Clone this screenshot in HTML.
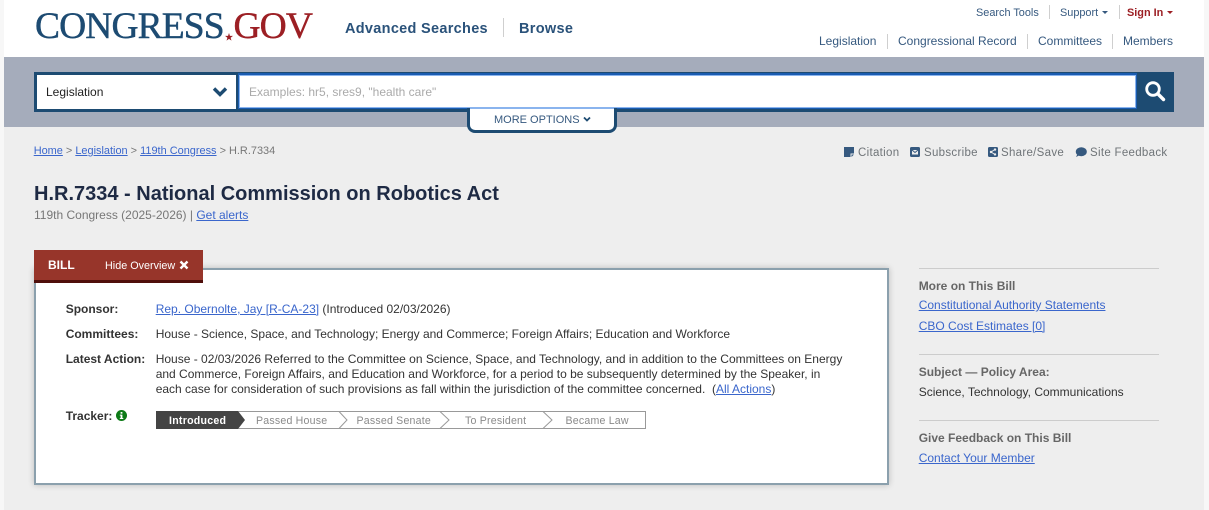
<!DOCTYPE html>
<html><head><meta charset="utf-8">
<style>
html,body{margin:0;padding:0;width:1209px;height:510px;overflow:hidden;background:#f7f7f7;font-family:"Liberation Sans",sans-serif;}
.t{position:absolute;white-space:nowrap;line-height:14px;}
a{color:#3a66cc;text-decoration:underline;}
.n{color:#36597f;font-size:12px;}
.sep{position:absolute;width:1px;background:#cfcfcf;}
.b{font-weight:bold;}
.hr{position:absolute;left:919px;width:240px;height:1px;background:#cccccc;}
.lab{font-size:12px;font-weight:bold;color:#333;}
.body{font-size:12px;color:#333;}
.side{font-size:12px;color:#666;font-weight:bold;}
.trk{font-size:10.6px;color:#8a8a8a;letter-spacing:.2px;}
.act{font-size:11.5px;color:#6f7478;letter-spacing:.3px;}
.logo{font-family:'Liberation Serif',serif;font-size:37.5px;line-height:38px;letter-spacing:-.9px;-webkit-text-stroke:.45px;}
</style></head>
<body>
<div style="position:absolute;left:4px;top:0;width:1200px;height:510px;background:#eeeeee"></div>
<div style="position:absolute;left:4px;top:0;width:1200px;height:57px;background:#fff"></div>
<div style="position:absolute;left:4px;top:57px;width:1200px;height:70px;background:#a5acbb"></div>

<div class="t logo" style="left:35px;top:8px;color:#1d4b72">CONGRESS</div>
<svg style="position:absolute;left:225px;top:33px" width="8" height="8" viewBox="0 0 10 10"><polygon points="5,0 6.2,3.6 10,3.6 7,5.9 8.1,9.6 5,7.3 1.9,9.6 3,5.9 0,3.6 3.8,3.6" fill="#9c1f24"/></svg>
<div class="t logo" style="left:233.5px;top:8px;color:#9c1f24">GOV</div>

<div class="t b" style="left:345px;top:20.5px;font-size:14.5px;line-height:16px;color:#2a527a;letter-spacing:.3px">Advanced Searches</div>
<div class="sep" style="left:503px;top:18px;height:19px"></div>
<div class="t b" style="left:519px;top:20.5px;font-size:14.5px;line-height:16px;color:#2a527a;letter-spacing:.3px">Browse</div>

<div class="t" style="left:976px;top:6px;font-size:10.9px;color:#36597f;">Search Tools</div>
<div class="sep" style="left:1049px;top:5px;height:14px"></div>
<div class="t" style="left:1060px;top:6px;font-size:10.9px;color:#36597f;">Support</div>
<div style="position:absolute;left:1102px;top:11px;border:3px solid transparent;border-top:3.5px solid #36597f;border-bottom:0"></div>
<div class="sep" style="left:1119px;top:5px;height:14px"></div>
<div class="t b" style="left:1127px;top:6px;font-size:10.9px;color:#9c1f24">Sign In</div>
<div style="position:absolute;left:1167px;top:11px;border:3px solid transparent;border-top:3.5px solid #9c1f24;border-bottom:0"></div>

<div class="t n" style="left:819px;top:34px">Legislation</div>
<div class="sep" style="left:887px;top:34px;height:15px"></div>
<div class="t n" style="left:898px;top:34px">Congressional Record</div>
<div class="sep" style="left:1027px;top:34px;height:15px"></div>
<div class="t n" style="left:1038px;top:34px">Committees</div>
<div class="sep" style="left:1112px;top:34px;height:15px"></div>
<div class="t n" style="left:1123px;top:34px">Members</div>

<div style="position:absolute;left:34px;top:72px;width:1140px;height:40px;background:#1d4b72"></div>
<div style="position:absolute;left:37px;top:75px;width:199px;height:34px;background:#fff"></div>
<div class="t" style="left:46px;top:85px;font-size:12px;color:#222">Legislation</div>
<svg style="position:absolute;left:212px;top:86px" width="16" height="12" viewBox="0 0 16 12"><path d="M2 2.5 L8 8.5 L14 2.5" fill="none" stroke="#1d4b72" stroke-width="3.4"/></svg>
<div style="position:absolute;left:238px;top:73px;width:899px;height:36px;background:#1a5cb0"></div>
<div style="position:absolute;left:239px;top:75px;width:897px;height:33px;background:#fff;border:1px solid #8ab4ee;box-sizing:border-box"></div>
<div class="t" style="left:249px;top:85px;font-size:12px;color:#aaa">Examples: hr5, sres9, "health care"</div>
<svg style="position:absolute;left:1144px;top:80px" width="22" height="22" viewBox="0 0 22 22"><circle cx="9" cy="9" r="6.3" fill="none" stroke="#fff" stroke-width="2.8"/><path d="M14 14 L19.5 19.5" stroke="#fff" stroke-width="3.4" stroke-linecap="round"/></svg>

<div style="position:absolute;left:467px;top:108px;width:150px;height:25px;box-sizing:border-box;background:#fff;border:3px solid #1d4b72;border-top:0;border-radius:0 0 8px 8px"></div>
<div style="position:absolute;left:470px;top:108px;width:144px;height:1px;background:#8ab4ee"></div>
<div class="t" style="left:494px;top:113px;font-size:11px;color:#36597f">MORE OPTIONS</div>
<svg style="position:absolute;left:583px;top:116px" width="8" height="7" viewBox="0 0 8 7"><path d="M1 1.5 L4 4.5 L7 1.5" fill="none" stroke="#1d4b72" stroke-width="1.8"/></svg>

<div class="t" style="left:33.7px;top:144px;font-size:10.95px;color:#777"><a href="#">Home</a> &gt; <a href="#">Legislation</a> &gt; <a href="#">119th Congress</a> &gt; H.R.7334</div>

<svg style="position:absolute;left:844px;top:147px" width="10" height="10" viewBox="0 0 10 10"><path d="M0 0H10V6.5H6.5V10H0Z" fill="#36597f"/><path d="M7.5 7.5H10L7.5 10Z" fill="#36597f"/></svg>
<div class="t act" style="left:858px;top:146px">Citation</div>
<svg style="position:absolute;left:910px;top:147px" width="10" height="10" viewBox="0 0 10 10"><rect width="10" height="10" rx="1.5" fill="#36597f"/><rect x="2" y="3" width="6" height="4.5" fill="#eee"/><path d="M2 3 L5 5.5 L8 3" fill="none" stroke="#36597f"/></svg>
<div class="t act" style="left:924px;top:146px">Subscribe</div>
<svg style="position:absolute;left:988px;top:147px" width="10" height="10" viewBox="0 0 10 10"><rect width="10" height="10" rx="1.5" fill="#36597f"/><path d="M7 2.5 L3 5 L7 7.5" fill="none" stroke="#eee"/><circle cx="7" cy="2.6" r="1.2" fill="#eee"/><circle cx="3" cy="5" r="1.2" fill="#eee"/><circle cx="7" cy="7.4" r="1.2" fill="#eee"/></svg>
<div class="t act" style="left:1001px;top:146px">Share/Save</div>
<svg style="position:absolute;left:1075px;top:146.5px" width="12" height="10" viewBox="0 0 12 10"><ellipse cx="6.3" cy="4.7" rx="5.5" ry="4.5" fill="#36597f"/><path d="M1 10 L3 6 L5 8Z" fill="#36597f"/></svg>
<div class="t act" style="left:1090px;top:146px">Site Feedback</div>

<div class="t b" style="left:34px;top:183px;font-size:20px;line-height:22px;color:#1e2a44">H.R.7334 - National Commission on Robotics Act</div>
<div class="t" style="left:34px;top:208px;font-size:12px;color:#777">119th Congress (2025-2026) | <a href="#">Get alerts</a></div>

<div style="position:absolute;left:34px;top:268px;width:855px;height:217px;box-sizing:border-box;background:#fff;border:2px solid #8ba0ad;box-shadow:0 0 6px rgba(0,0,0,.22)"></div>
<div style="position:absolute;left:34px;top:250px;width:169px;height:30px;background:#97352a;border-bottom:3px solid #4f0f0b"></div>
<div class="t b" style="left:48px;top:258px;font-size:12px;color:#fff">BILL</div>
<div class="t" style="left:105px;top:258.5px;font-size:10.8px;color:#fff">Hide Overview</div>
<svg style="position:absolute;left:179px;top:260px" width="10" height="10" viewBox="0 0 10 10"><path d="M1.5 1.5 L8.5 8.5 M8.5 1.5 L1.5 8.5" stroke="#fff" stroke-width="2.4"/></svg>

<div class="t lab" style="left:65.7px;top:302px">Sponsor:</div>
<div class="t body" style="left:155.7px;top:302px"><a href="#">Rep. Obernolte, Jay [R-CA-23]</a> (Introduced 02/03/2026)</div>
<div class="t lab" style="left:65.7px;top:327px">Committees:</div>
<div class="t body" style="left:155.7px;top:327px">House - Science, Space, and Technology; Energy and Commerce; Foreign Affairs; Education and Workforce</div>
<div class="t lab" style="left:65.7px;top:352px">Latest Action:</div>
<div class="t body" style="left:155.7px;top:352px">House - 02/03/2026 Referred to the Committee on Science, Space, and Technology, and in addition to the Committees on Energy</div>
<div class="t body" style="left:155.7px;top:367px">and Commerce, Foreign Affairs, and Education and Workforce, for a period to be subsequently determined by the Speaker, in</div>
<div class="t body" style="left:155.7px;top:382px">each case for consideration of such provisions as fall within the jurisdiction of the committee concerned.&nbsp; (<a href="#">All Actions</a>)</div>
<div class="t lab" style="left:65.7px;top:409px">Tracker:</div>
<svg style="position:absolute;left:116px;top:410px" width="11" height="11" viewBox="0 0 11 11"><circle cx="5.5" cy="5.5" r="5.5" fill="#0c7a16"/><rect x="4.6" y="2" width="1.8" height="1.7" fill="#fff"/><path d="M3.8 4.6H6.4V8H7.3V9H3.8V8H4.6V5.6H3.8Z" fill="#fff"/></svg>

<svg style="position:absolute;left:156px;top:411px" width="490" height="18" viewBox="0 0 490 18">
<rect x=".5" y=".5" width="489" height="17" fill="#fff" stroke="#999"/>
<path d="M0 0H82L89 9L82 18H0Z" fill="#444"/>
<path d="M183 .5L191 9L183 17.5M284 .5L293 9L284 17.5M387 .5L396 9L387 17.5" fill="none" stroke="#999"/>
</svg>
<div class="t b" style="left:169px;top:414px;font-size:10.6px;color:#fff;letter-spacing:.25px">Introduced</div>
<div class="t trk" style="left:256px;top:414px">Passed House</div>
<div class="t trk" style="left:356.5px;top:414px">Passed Senate</div>
<div class="t trk" style="left:465px;top:414px">To President</div>
<div class="t trk" style="left:565.5px;top:414px">Became Law</div>

<div class="hr" style="top:268px"></div>
<div class="t side" style="left:918.7px;top:279px">More on This Bill</div>
<div class="t" style="left:918.7px;top:298px;font-size:12px"><a href="#">Constitutional Authority Statements</a></div>
<div class="t" style="left:918.7px;top:319px;font-size:12px"><a href="#">CBO Cost Estimates [0]</a></div>
<div class="hr" style="top:354px"></div>
<div class="t side" style="left:918.7px;top:365px">Subject — Policy Area:</div>
<div class="t body" style="left:918.7px;top:385px">Science, Technology, Communications</div>
<div class="hr" style="top:420px"></div>
<div class="t side" style="left:918.7px;top:431px">Give Feedback on This Bill</div>
<div class="t" style="left:918.7px;top:451px;font-size:12px"><a href="#">Contact Your Member</a></div>
</body></html>
